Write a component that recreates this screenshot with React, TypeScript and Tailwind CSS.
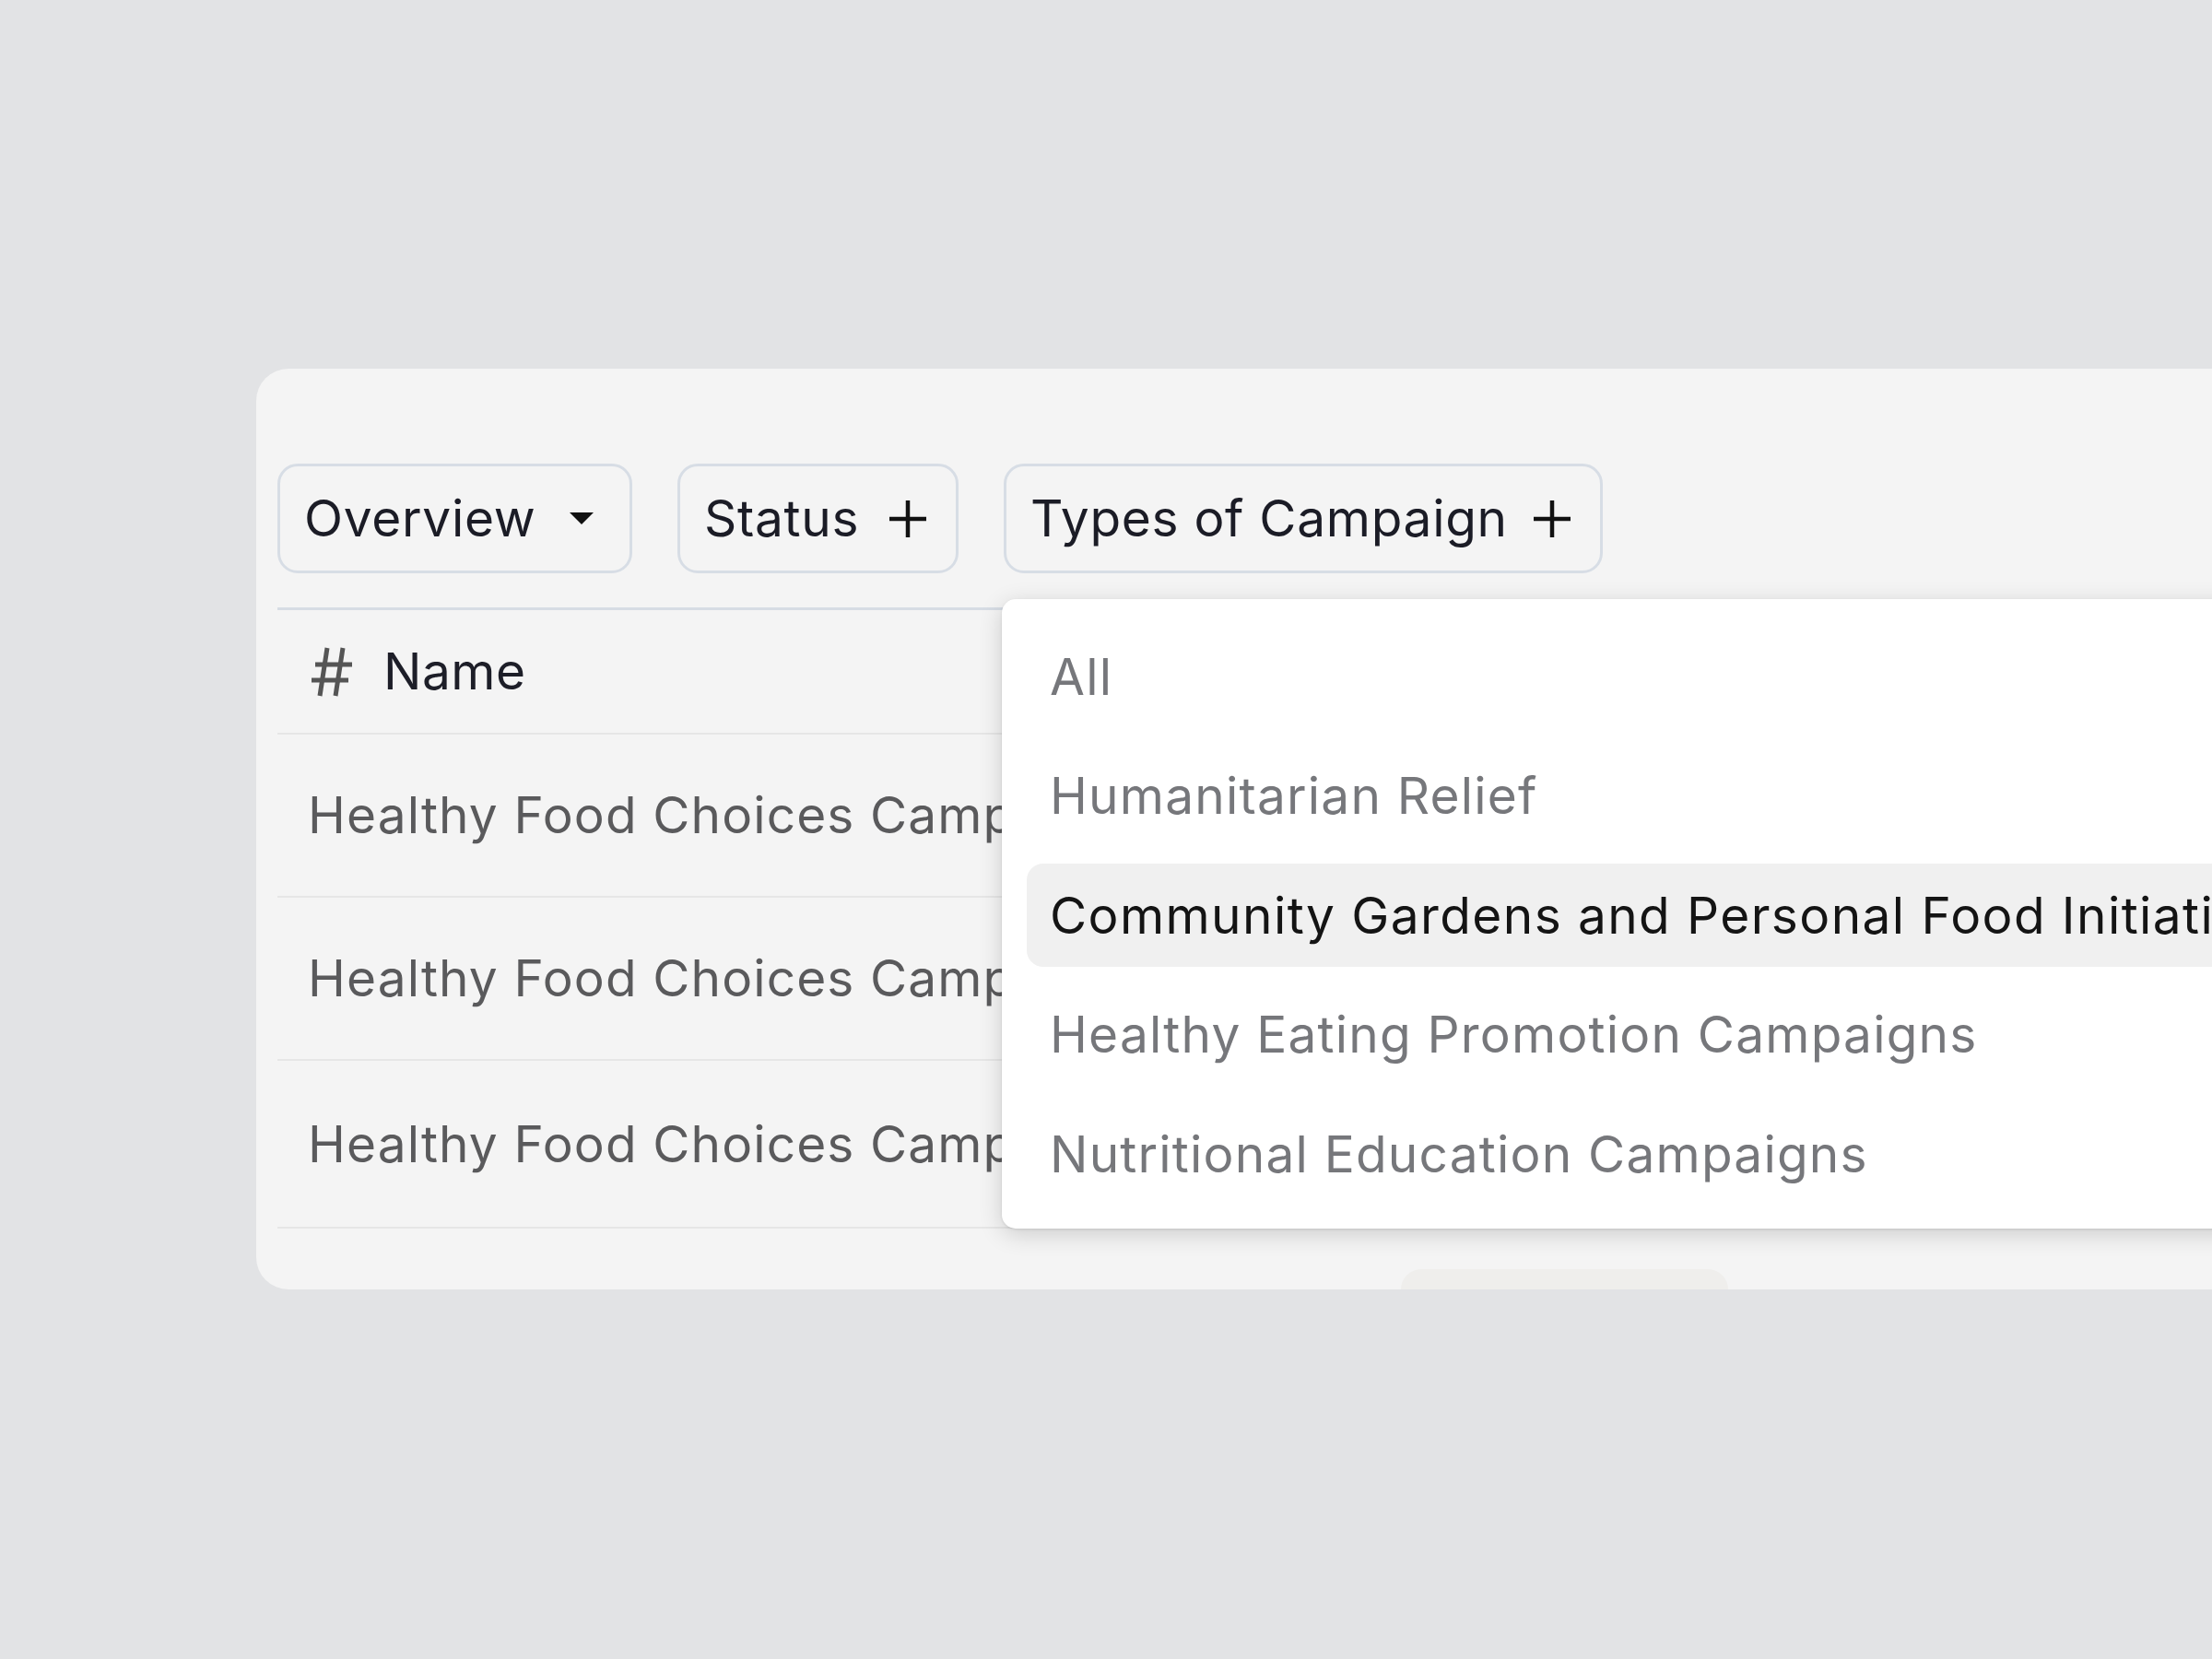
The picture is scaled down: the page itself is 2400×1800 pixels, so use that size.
import React from "react";

const font = { fontFamily: "Inter, 'Noto Sans', sans-serif" };

function Caret() {
  return (
    <span className="flex w-[56px] h-[56px] items-center justify-center">
      <svg width="26" height="14" viewBox="0 0 26 14">
        <polygon points="0,0 26,0 13,13" fill="#111" />
      </svg>
    </span>
  );
}

function Plus() {
  return (
    <span className="flex w-[56px] h-[56px] items-center justify-center">
      <svg width="40" height="40" viewBox="0 0 40 40">
        <line x1="20" y1="0" x2="20" y2="40" stroke="#111" strokeWidth="4.5" />
        <line x1="0" y1="20" x2="40" y2="20" stroke="#111" strokeWidth="4.5" />
      </svg>
    </span>
  );
}

function Hash() {
  return (
    <svg width="48" height="54" viewBox="0 0 48 54" className="shrink-0">
      <line x1="17" y1="1" x2="9" y2="53" stroke="#555" strokeWidth="5" />
      <line x1="34" y1="1" x2="26" y2="53" stroke="#555" strokeWidth="5" />
      <line x1="4" y1="19" x2="44" y2="19" stroke="#555" strokeWidth="5" />
      <line x1="0" y1="36" x2="40" y2="36" stroke="#555" strokeWidth="5" />
    </svg>
  );
}

function FilterButton({
  label,
  icon,
  width,
}: {
  label: string;
  icon: React.ReactNode;
  width: string;
}) {
  return (
    <div
      className={
        "flex h-[119px] items-center justify-between rounded-[22px] border-[3px] border-[#d7dde5] pl-[26px] pr-[24px] text-[55px] leading-none tracking-[0.7px] text-[#1b1c26] " +
        width
      }
    >
      <span>{label}</span>
      {icon}
    </div>
  );
}

const items = [
  "All",
  "Humanitarian Relief",
  "Community Gardens and Personal Food Initiatives",
  "Healthy Eating Promotion Campaigns",
  "Nutritional Education Campaigns",
];

export default function App() {
  return (
    <div
      className="w-[2400px] h-[1800px] overflow-hidden bg-[#e2e3e5] pl-[278px] pt-[400px]"
      style={font}
    >
      <div className="relative w-[2400px] h-[999px] overflow-hidden rounded-[35px] bg-[#f4f4f4] pl-[23px] pt-[103px]">
        <div className="flex gap-[49px]">
          <FilterButton label="Overview" icon={<Caret />} width="w-[385px]" />
          <FilterButton label="Status" icon={<Plus />} width="w-[305px]" />
          <div className="relative">
            <FilterButton label="Types of Campaign" icon={<Plus />} width="w-[650px]" />
            <div className="absolute left-[-2px] top-[147px] z-10 w-[1600px] rounded-[15px] bg-white px-[27px] pt-[28px] pb-[25px] shadow-[0_6px_26px_rgba(0,0,0,0.16),0_1px_3px_rgba(0,0,0,0.10)]">
              <div className="flex flex-col gap-[17.5px]">
                {items.map((it, i) => (
                  <div
                    key={it}
                    className={
                      i === 2
                        ? "flex h-[112px] items-center rounded-[18px] bg-[#f0f0f0] px-[25px] text-[55px] leading-none tracking-[1.4px] text-[#141414] whitespace-nowrap"
                        : "flex h-[112px] items-center px-[25px] text-[55px] leading-none tracking-[1.2px] text-[#76777b] whitespace-nowrap"
                    }
                  >
                    {it}
                  </div>
                ))}
              </div>
            </div>
          </div>
        </div>

        <div className="mt-[37px] w-[2200px]">
          <div className="flex h-[138px] items-center gap-[30px] border-t-[3px] border-[#d6dce4] border-b-[2px] border-b-[#e6e6e6] pl-[37px] text-[55px] leading-none tracking-[0.5px] text-[#1d1e28]">
            <Hash />
            <span>Name</span>
          </div>
          {[177, 177, 182].map((h, i) => (
            <div
              key={i}
              style={{ height: h }}
              className="flex items-center border-b-[2px] border-[#e6e6e6] pl-[33px] text-[55px] leading-none tracking-[1.1px] text-[#5a5a5c] whitespace-nowrap"
            >
              Healthy Food Choices Campaign
            </div>
          ))}
          <div className="flex h-[100px] pt-[44px] pl-[1219px]">
            <div className="h-[60px] w-[355px] rounded-[22px] bg-[#efeeec]" />
          </div>
        </div>
      </div>
    </div>
  );
}
